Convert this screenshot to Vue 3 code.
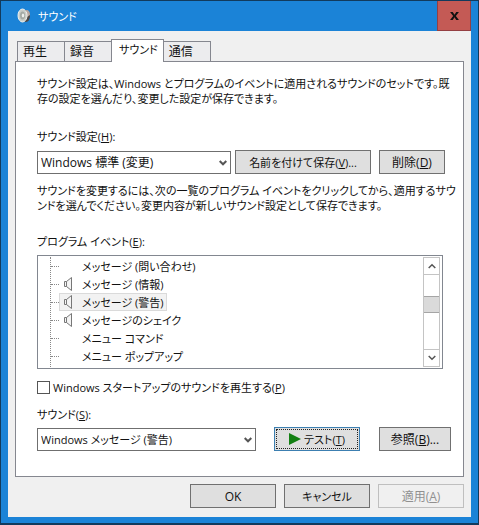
<script setup>
import { ref } from 'vue'

const tabs = ['再生', '録音', 'サウンド', '通信']
const activeTab = ref('サウンド')

const events = [
  { name: 'メッセージ (問い合わせ)', sound: false },
  { name: 'メッセージ (情報)', sound: true },
  { name: 'メッセージ (警告)', sound: true },
  { name: 'メッセージのシェイク', sound: true },
  { name: 'メニュー コマンド', sound: false },
  { name: 'メニュー ポップアップ', sound: false },
]
const selectedEvent = ref('メッセージ (警告)')

const scheme = ref('Windows 標準 (変更)')
const sound = ref('Windows メッセージ (警告)')
const startup = ref(false)
</script>

<template>
  <div class="window">
    <header class="titlebar">
      <svg class="app-icon" width="14" height="16" viewBox="0 0 14 16" aria-hidden="true">
        <ellipse cx="9" cy="8" rx="4" ry="6" fill="#4e4a48" />
        <path d="M9 2c3 0 4 2 4 5l-3 2z" fill="#b9a8a0" />
        <ellipse cx="5.500" cy="7.500" rx="4.500" ry="6.500" fill="#c9cdc8" stroke="#f2f2ee" />
        <ellipse cx="5.500" cy="7.500" rx="2.500" ry="4" fill="#a4aaa5" />
        <ellipse cx="6" cy="7.500" rx="1.200" ry="2" fill="#eef1ee" />
      </svg>
      <h1 class="title">サウンド</h1>
      <button class="close" type="button" aria-label="閉じる">
        <svg width="9" height="8" viewBox="0 0 10 9"><path d="M0 0h3l2 3 2-3h3L6.500 4.500 10 9H7L5 6 3 9H0l3.500-4.500z" fill="#111" /></svg>
      </button>
    </header>

    <main class="body">
      <div class="tabs" role="tablist">
        <button
          v-for="tab in tabs"
          :key="tab"
          type="button"
          role="tab"
          class="tab"
          :class="{ active: tab === activeTab }"
          :aria-selected="tab === activeTab"
          @click="activeTab = tab"
        >{{ tab }}</button>
      </div>

      <section class="panel" role="tabpanel">
        <p class="text">サウンド設定は、Windows とプログラムのイベントに適用されるサウンドのセットです。既<br>存の設定を選んだり、変更した設定が保存できます。</p>

        <label class="label scheme-label" for="scheme">サウンド設定(<u>H</u>):</label>
        <div class="row scheme-row">
          <div class="combo">
            <select id="scheme" v-model="scheme" class="large">
              <option>Windows 標準 (変更)</option>
            </select>
            <svg class="chevron" width="8" height="6" viewBox="0 0 8 6" aria-hidden="true"><path d="M.7 1 4 4.300 7.300 1" /></svg>
          </div>
          <button class="btn save" type="button"><span>名前を付けて保存(<u>V</u>)...</span></button>
          <button class="btn delete large" type="button"><span>削除(<u>D</u>)</span></button>
        </div>

        <p class="text change-text">サウンドを変更するには、次の一覧のプログラム イベントをクリックしてから、適用するサウ<br>ンドを選んでください。変更内容が新しいサウンド設定として保存できます。</p>

        <span id="events-label" class="label events-label">プログラム イベント(<u>E</u>):</span>
        <div class="listbox">
          <ul class="tree" role="listbox" aria-labelledby="events-label" tabindex="0">
            <li
              v-for="event in events"
              :key="event.name"
              class="node"
              role="option"
              :aria-selected="event.name === selectedEvent"
              @click="selectedEvent = event.name"
            >
              <span class="branch"></span>
              <span class="item" :class="{ selected: event.name === selectedEvent }">
                <span class="icon">
                  <svg v-if="event.sound" width="9" height="14" viewBox="0 0 9 14" aria-hidden="true">
                    <path d="M.5 4.500h2v5h-2zM2.500 4.500l5-4v13l-5-4" fill="#f4f4f4" stroke="#777" />
                  </svg>
                </span>
                <span>{{ event.name }}</span>
              </span>
            </li>
          </ul>
          <div class="scrollbar">
            <button type="button" class="arrow" aria-label="上へ">
              <svg width="8" height="6" viewBox="0 0 8 6"><path d="M.7 5 4 1.700 7.300 5" /></svg>
            </button>
            <div class="track"><div class="thumb"></div></div>
            <button type="button" class="arrow" aria-label="下へ">
              <svg width="8" height="6" viewBox="0 0 8 6"><path d="M.7 1 4 4.300 7.300 1" /></svg>
            </button>
          </div>
        </div>

        <label class="check">
          <input v-model="startup" type="checkbox">
          <span>Windows スタートアップのサウンドを再生する(<u>P</u>)</span>
        </label>

        <label class="label sound-label" for="sound">サウンド(<u>S</u>):</label>
        <div class="row sound-row">
          <div class="combo">
            <select id="sound" v-model="sound">
              <option>Windows メッセージ (警告)</option>
            </select>
            <svg class="chevron" width="8" height="6" viewBox="0 0 8 6" aria-hidden="true"><path d="M.7 1 4 4.300 7.300 1" /></svg>
          </div>
          <button class="btn test" type="button">
            <svg width="12" height="12" viewBox="0 0 12 12" aria-hidden="true"><path d="M0 0l12 6-12 6z" fill="#138013" /></svg>
            <span>テスト(<u>T</u>)</span>
          </button>
          <button class="btn browse large" type="button"><span>参照(<u>B</u>)...</span></button>
        </div>
      </section>

      <footer class="actions">
        <button class="btn large" type="button">OK</button>
        <button class="btn" type="button">キャンセル</button>
        <button class="btn large" type="button" disabled><span>適用(<u>A</u>)</span></button>
      </footer>
    </main>
  </div>
</template>

<style>
body {
  background: #1b83d7;
}
</style>

<style scoped>
.window,
.window * {
  box-sizing: border-box;
}
.window {
  padding: 0 7px 6px;
  border: 1px solid #123a5c;
  border-bottom-width: 2px;
  background: #1b83d7;
  color: #111;
  font: 11px/15px "Open Sans", "Noto Sans CJK JP", sans-serif;
  font-feature-settings: "palt";
}
button,
select,
input {
  margin: 0;
  padding: 0;
  border-radius: 0;
  font: inherit;
  font-feature-settings: inherit;
  color: inherit;
}
.large {
  font-size: 12px;
}
.titlebar {
  display: flex;
  align-items: center;
  height: 30px;
  padding-left: 9px;
}
.title {
  flex: 1;
  margin: 0 0 0 7px;
  color: #fff;
  font-size: 11px;
  font-weight: 400;
}
.close {
  display: flex;
  align-items: center;
  justify-content: center;
  width: 34px;
  height: 30px;
  border: 1px solid #943f42;
  border-top: 0;
  background: #c45a55;
}
.body {
  padding: 8px 7px 9px;
  background: #f0f0f0;
}
.tabs {
  display: flex;
  align-items: flex-end;
  padding-left: 2px;
}
.tab {
  height: 20px;
  margin-right: -1px;
  padding: 0 17px 0 5px;
  border: 1px solid #85878f;
  border-bottom: 0;
  background: #ececee;
  font-size: 12px;
}
.tab.active {
  z-index: 1;
  height: 23px;
  margin-bottom: -1px;
  padding: 0 5px 4px 7px;
  background: #fff;
  font-size: 11px;
}
.panel {
  padding: 14px 12px 25px 21px;
  border: 1px solid #85878f;
  background: #fff;
}
.text {
  margin: 0;
  white-space: nowrap;
}
.label {
  display: block;
}
.scheme-label {
  margin-top: 23px;
}
.row {
  display: flex;
  align-items: center;
}
.scheme-row {
  margin-top: 6px;
  padding-right: 6px;
}
.combo {
  position: relative;
  flex: 1;
}
.combo select {
  display: block;
  width: 100%;
  height: 23px;
  padding: 0 20px 0 3px;
  border: 1px solid #6f6f6f;
  background: #fff;
  appearance: none;
}
.chevron {
  position: absolute;
  top: 9px;
  right: 4px;
  pointer-events: none;
}
.chevron path,
.arrow path {
  fill: none;
  stroke: #555;
  stroke-width: 2;
}
.arrow path {
  stroke-width: 1.5;
}
.btn {
  display: flex;
  align-items: center;
  justify-content: center;
  height: 24px;
  border: 1px solid #707070;
  background: #dfdfdf;
  white-space: nowrap;
}
.save {
  width: 136px;
  margin-left: 4px;
}
.delete {
  width: 66px;
  margin-left: 8px;
}
.change-text {
  margin-top: 9px;
}
.events-label {
  margin-top: 21px;
}
.listbox {
  display: flex;
  margin: 6px 8px 0 0;
  padding: 1px;
  border: 1px solid #828790;
}
.tree {
  flex: 1;
  margin: 0 0 0 11px;
  padding: 0 0 2px;
  border-left: 1px dotted #888;
  list-style: none;
  outline: 0;
}
.node {
  display: flex;
  align-items: center;
  height: 18px;
}
.branch {
  width: 8px;
  border-top: 1px dotted #888;
}
.item {
  display: flex;
  align-items: center;
  height: 18px;
  padding-right: 3px;
  border: 1px solid transparent;
}
.item.selected {
  border-color: #dadada;
  background: #f2f2f2;
}
.icon {
  display: flex;
  width: 22px;
  padding-left: 4px;
}
.scrollbar {
  display: flex;
  flex-direction: column;
  width: 17px;
  margin-right: 1px;
  border: 1px solid #c4c4c4;
}
.arrow {
  display: flex;
  align-items: center;
  justify-content: center;
  height: 16px;
  border: 0;
  background: #fff;
}
.track {
  flex: 1;
  padding-top: 21px;
  border: solid #c4c4c4;
  border-width: 1px 0;
}
.thumb {
  height: 17px;
  border: solid #a5a5a5;
  border-width: 1px 0;
  background: #dadada;
}
.check {
  display: flex;
  align-items: center;
  gap: 3px;
  margin-top: 11px;
}
.check input {
  width: 13px;
  height: 13px;
  border: 1px solid #555;
  background: #fff;
  appearance: none;
}
.check input:checked {
  background: #555;
}
.sound-label {
  margin-top: 12px;
}
.sound-row {
  margin-top: 5px;
}
.test {
  gap: 3px;
  width: 86px;
  margin-left: 18px;
  border-color: #3c7fb1;
  outline: 1px dotted #222;
  outline-offset: -3px;
}
.browse {
  width: 72px;
  margin-left: 19px;
}
.actions {
  display: flex;
  justify-content: flex-end;
  gap: 8px;
  padding-top: 7px;
}
.actions .btn {
  width: 86px;
}
.btn:disabled {
  border-color: #bfbfbf;
  background: #f0f0f0;
  color: #909090;
}
</style>
